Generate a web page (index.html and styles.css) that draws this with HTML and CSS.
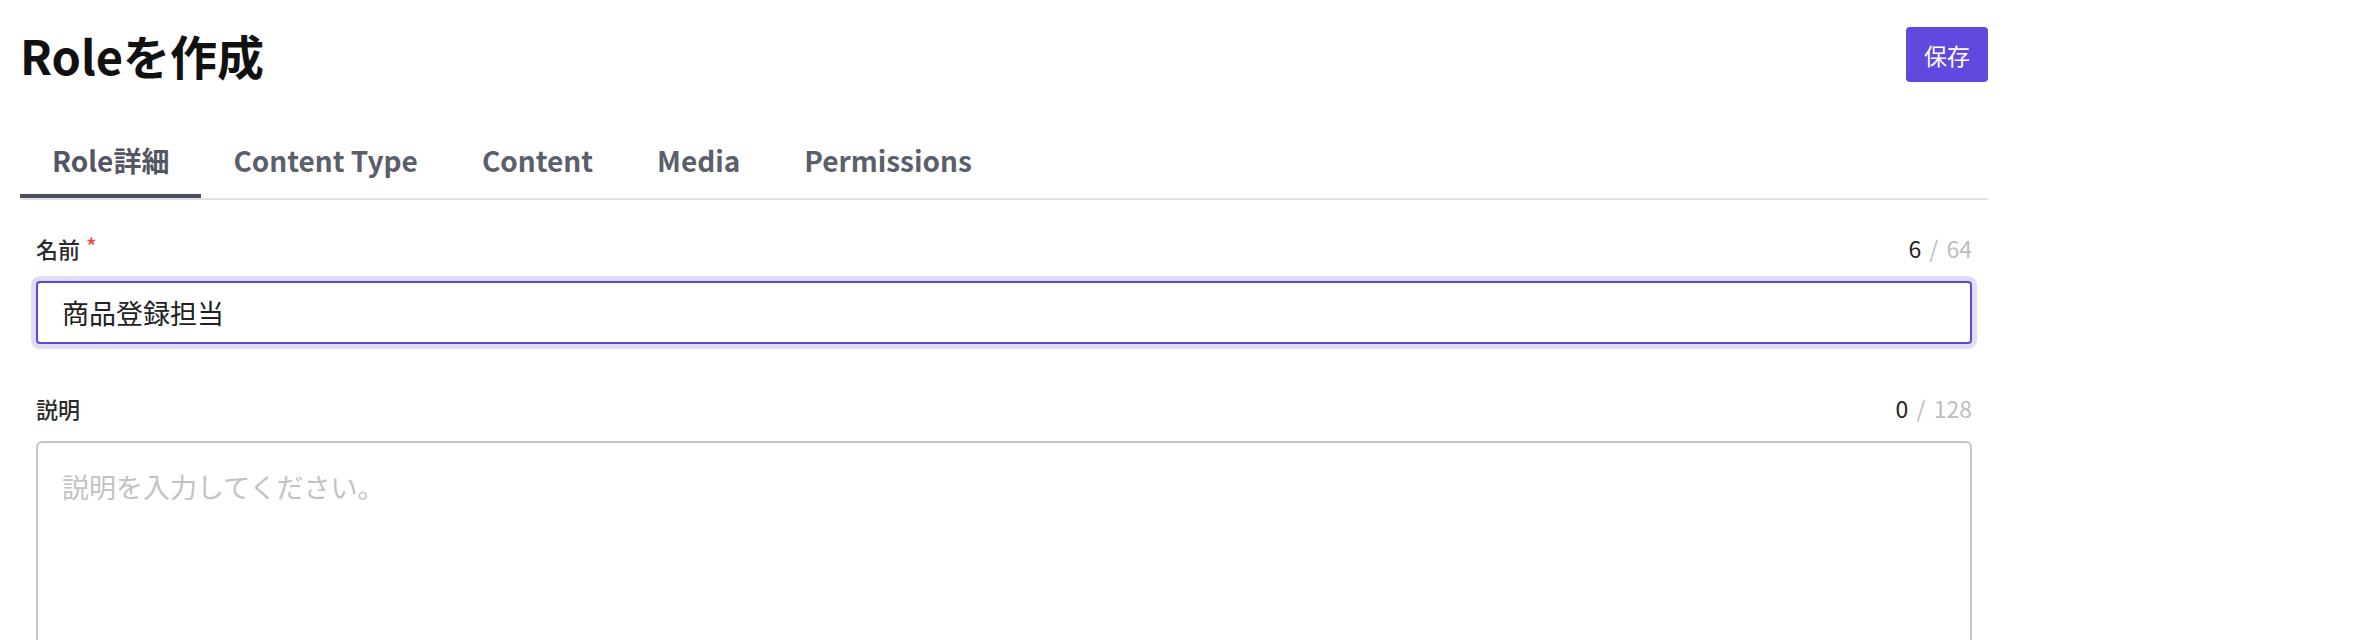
FILE: index.html
```html
<!DOCTYPE html>
<html lang="ja">
<head>
    <meta charset="UTF-8">
    <meta name="viewport" content="width=device-width, initial-scale=1.0">
    <title>Roleを作成</title>
    <link rel="stylesheet" href="styles.css">
</head>
<body>
    <main class="page">
        <header class="page-header">
            <h1>Roleを作成</h1>
            <button class="save-button" type="submit" form="roleForm">保存</button>
        </header>

        <nav class="tabs">
            <a class="tab active" href="#">Role詳細</a>
            <a class="tab" href="#">Content Type</a>
            <a class="tab" href="#">Content</a>
            <a class="tab" href="#">Media</a>
            <a class="tab" href="#">Permissions</a>
        </nav>

        <form id="roleForm" class="role-form">
            <div class="form-group">
                <div class="field-head">
                    <label for="roleName">名前<span class="required">*</span></label>
                    <span class="counter"><span class="count">6</span> / 64</span>
                </div>
                <input type="text" id="roleName" class="text-input focused" value="商品登録担当" maxlength="64">
            </div>

            <div class="form-group">
                <div class="field-head">
                    <label for="roleDescription">説明</label>
                    <span class="counter"><span class="count">0</span> / 128</span>
                </div>
                <textarea id="roleDescription" class="text-area" maxlength="128" placeholder="説明を入力してください。"></textarea>
            </div>
        </form>
    </main>
</body>
</html>
```

FILE: styles.css
```css
body {
    margin: 0;
    padding: 0;
    background: #fff;
    color: #222;
    font-family: "Noto Sans CJK JP", "Noto Sans", sans-serif;
}
.page {
    width: 1968px;
    padding: 20px 0 0 20px;
}
.page-header {
    display: flex;
    justify-content: space-between;
    align-items: center;
    height: 69px;
}
.page-header h1 {
    margin: 0;
    font-size: 47px;
    line-height: 69px;
    font-weight: 700;
    color: #111;
}
.save-button {
    height: 55px;
    padding: 0 18px;
    border: none;
    border-radius: 4px;
    background-color: #6148df;
    color: #fff;
    font-family: inherit;
    font-size: 23px;
    cursor: pointer;
}
.tabs {
    display: flex;
    margin-top: 38px;
    border-bottom: 2px solid #e2e2e2;
}
.tab {
    padding: 12px 32px;
    line-height: 43px;
    font-size: 28px;
    font-weight: 700;
    color: #5b5f6c;
    text-decoration: none;
    border-bottom: 4px solid transparent;
}
.tab.active {
    color: #535764;
    border-bottom-color: #4b4e5c;
}
.role-form {
    padding: 32px 16px 0;
}
.form-group {
    margin-bottom: 48px;
}
.field-head {
    display: flex;
    justify-content: space-between;
    align-items: center;
    margin-bottom: 16px;
    line-height: 33px;
}
.field-head label {
    font-size: 22px;
    font-weight: 500;
    color: #2a2a2a;
}
.required {
    margin-left: 6px;
    font-size: 22px;
    color: #e4513f;
    vertical-align: top;
    line-height: 26px;
}
.counter {
    font-size: 23px;
    font-weight: 400;
    word-spacing: 3px;
    color: #bdbdbd;
}
.counter .count {
    color: #222;
}
.text-input,
.text-area {
    display: block;
    width: 100%;
    box-sizing: border-box;
    font-family: inherit;
    font-size: 27px;
    color: #222;
    outline: none;
}
.text-input {
    height: 63px;
    padding: 0 24px;
    border: 2px solid #c6c6c6;
    border-radius: 4px;
}
.text-input.focused {
    border-color: #5a49d2;
    box-shadow: 0 0 0 5px #e1ddf8;
}
.text-area {
    height: 260px;
    padding: 24px;
    line-height: 1.5;
    border: 2px solid #c6c6c6;
    border-radius: 6px;
    resize: vertical;
}
.text-area::placeholder {
    color: #c2c2c2;
}
```
